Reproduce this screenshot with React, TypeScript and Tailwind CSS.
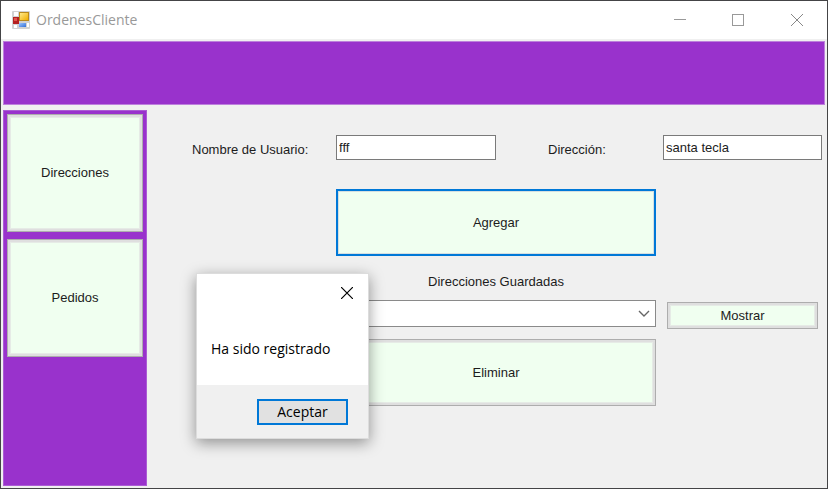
import type { ReactNode } from "react";

function FormButton({ children, className = "" }: { children: ReactNode; className?: string }) {
  return (
    <button
      type="button"
      className={`border border-[#adadad] bg-[#f0fff0] text-center shadow-[inset_0_0_0_2px_#dfdfdf,inset_0_0_0_3px_#e6ebe6] ${className}`}
    >
      {children}
    </button>
  );
}

function FormIcon() {
  return (
    <svg width="18" height="18" viewBox="0 0 18 18" aria-hidden="true">
      <defs>
        <linearGradient id="gold" x1="0" y1="0" x2="1" y2="1">
          <stop offset="0" stopColor="#ffe98a" />
          <stop offset="1" stopColor="#f0ae00" />
        </linearGradient>
        <linearGradient id="blue" x1="0" y1="0" x2="1" y2="1">
          <stop offset="0" stopColor="#9cc4ff" />
          <stop offset="1" stopColor="#3470d8" />
        </linearGradient>
      </defs>
      <rect width="18" height="18" rx="1" fill="#d2d2d2" />
      <rect x="2" y="1" width="4" height="4" fill="#fff" />
      <rect x="2" y="14" width="3" height="3" fill="#fff" />
      <rect x="15" y="12" width="2" height="4" fill="#fff" />
      <rect x="1" y="6" width="6" height="7" fill="#b52020" />
      <rect x="2" y="7" width="3" height="3" fill="#e0564c" />
      <rect x="7" y="1" width="10" height="9" fill="#b98a1c" />
      <rect x="8" y="2" width="8" height="7" fill="url(#gold)" />
      <rect x="7" y="12" width="7" height="4" fill="url(#blue)" />
    </svg>
  );
}

function TitleBar() {
  return (
    <header className="flex h-[38px] items-center bg-white pl-[11px] font-['Open_Sans','Noto_Sans',sans-serif] text-sm text-[#999999]">
      <FormIcon />
      <h1 className="ml-1.5 flex-1">OrdenesCliente</h1>
      <button type="button" aria-label="Minimizar" className="flex h-full w-[58px] items-center justify-center">
        <svg width="12" height="12" viewBox="0 0 12 12" stroke="#999" fill="none">
          <path d="M0 5.5h12" />
        </svg>
      </button>
      <button type="button" aria-label="Maximizar" className="flex h-full w-[58px] items-center justify-center">
        <svg width="12" height="12" viewBox="0 0 12 12" stroke="#999" fill="none">
          <rect x=".5" y=".5" width="11" height="11" />
        </svg>
      </button>
      <button type="button" aria-label="Cerrar" className="flex h-full w-[60px] items-center justify-center">
        <svg width="12" height="12" viewBox="0 0 12 12" stroke="#888" fill="none">
          <path d="M0 0l12 12M12 0L0 12" />
        </svg>
      </button>
    </header>
  );
}

function MessageBox() {
  return (
    <div
      role="dialog"
      aria-label="Ha sido registrado"
      className="absolute top-[272px] left-[195px] flex h-[166px] w-[173px] flex-col border border-[#dcdcdc] bg-white font-['Open_Sans','Noto_Sans',sans-serif] text-sm text-black shadow-[0_4px_14px_rgba(0,0,0,0.4)]"
    >
      <div className="flex justify-end pt-[13px] pr-[15px]">
        <button type="button" aria-label="Cerrar mensaje">
          <svg className="block" width="12" height="12" viewBox="0 0 12 12" stroke="#000" strokeWidth="1.2" fill="none">
            <path d="M0 0l12 12M12 0L0 12" />
          </svg>
        </button>
      </div>
      <p className="flex flex-1 items-end pb-[26px] pl-3.5">Ha sido registrado</p>
      <div className="flex h-[53px] items-center justify-end bg-[#f0f0f0] pr-5">
        <button type="button" className="h-[26px] w-[91px] border-2 border-[#0078d7] bg-[#e1e1e1] leading-5">
          Aceptar
        </button>
      </div>
    </div>
  );
}

export default function App() {
  return (
    <div className="relative flex min-h-screen flex-col border border-[#444446] bg-[#f0f0f0] font-['Liberation_Sans',Arial,sans-serif] text-[13px] leading-5 text-[#1c1c1c]">
      <TitleBar />
      <div className="flex flex-1 flex-col gap-[5px] p-0.5">
        <div className="h-16 border border-[#bd80dc] bg-[#9932cc]" />
        <div className="flex flex-1">
          <nav className="flex w-36 shrink-0 flex-col gap-[7px] border border-[#ab5cd4] bg-[#9932cc] p-[3px]">
            <FormButton className="h-[118px]">Direcciones</FormButton>
            <FormButton className="h-[118px]">Pedidos</FormButton>
          </nav>
          <main className="grid flex-1 grid-cols-[144fr_320fr_166fr] content-start pt-[25px] pr-[3px] pl-[45px]">
            <label htmlFor="usuario" className="self-center pt-1">
              Nombre de Usuario:
            </label>
            <div className="flex items-center">
              <input
                id="usuario"
                defaultValue="fff"
                className="h-[25px] w-1/2 border border-[#7a7a7a] bg-white px-0.5"
              />
              <label htmlFor="direccion" className="pt-1 pl-[52px]">
                Dirección:
              </label>
            </div>
            <div className="pl-[7px]">
              <input
                id="direccion"
                defaultValue="santa tecla"
                className="h-[25px] w-full border border-[#7a7a7a] bg-white px-0.5"
              />
            </div>

            <button
              type="button"
              className="col-start-2 mt-[29px] h-[67px] border-2 border-[#0078d7] bg-[#f0fff0] shadow-[inset_0_0_0_1px_#d5dfe0]"
            >
              Agregar
            </button>

            <label htmlFor="guardadas" className="col-start-2 mt-4 text-center">
              Direcciones Guardadas
            </label>

            <div className="relative col-start-2 mt-2">
              <select
                id="guardadas"
                defaultValue=""
                className="block h-[27px] w-full appearance-none border border-[#8a8a8a] bg-white pr-6 pl-1"
              >
                <option value=""></option>
              </select>
              <svg
                className="pointer-events-none absolute top-2.5 right-1.5"
                width="12"
                height="8"
                viewBox="0 0 12 8"
                fill="none"
                stroke="#666"
                strokeWidth="1.4"
              >
                <path d="M1 1l5 5 5-5" />
              </svg>
            </div>
            <div className="mt-2.5 pr-1 pl-[11px]">
              <FormButton className="h-[27px] w-full">Mostrar</FormButton>
            </div>

            <FormButton className="col-start-2 mt-2.5 h-[67px]">Eliminar</FormButton>
          </main>
        </div>
      </div>
      <MessageBox />
    </div>
  );
}
